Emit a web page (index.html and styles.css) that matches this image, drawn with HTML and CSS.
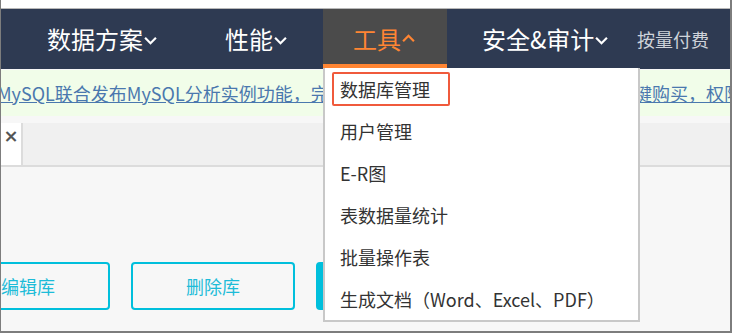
FILE: index.html
```html
<!DOCTYPE html>
<html lang="zh-CN">
<head>
  <meta charset="UTF-8" />
  <title>工具 - 数据库管理</title>
  <link rel="stylesheet" href="styles.css">
</head>
<body>
  <div class="frame">
    <div class="top-strip"></div>

    <nav class="topnav">
      <div class="nav-item item-plan">数据方案<svg class="chev" viewBox="0 0 12 8"><polyline points="1,1.5 6,6.5 11,1.5"/></svg></div>
      <div class="nav-item item-perf">性能<svg class="chev" viewBox="0 0 12 8"><polyline points="1,1.5 6,6.5 11,1.5"/></svg></div>
      <div class="nav-item nav-tools">工具<svg class="chev up" viewBox="0 0 12 8"><polyline points="1,6.5 6,1.5 11,6.5"/></svg>
        <ul class="dropdown">
          <li><span class="picked">数据库管理</span></li>
          <li>用户管理</li>
          <li>E-R图</li>
          <li>表数据量统计</li>
          <li>批量操作表</li>
          <li>生成文档（Word、Excel、PDF）</li>
        </ul>
      </div>
      <div class="nav-item item-sec">安全&amp;审计<svg class="chev" viewBox="0 0 12 8"><polyline points="1,1.5 6,6.5 11,1.5"/></svg></div>
      <div class="nav-item nav-small">按量付费</div>
    </nav>

    <div class="notice">
      <a class="notice-left" href="#">MySQL联合发布MySQL分析实例功能，完成一</a>
      <a class="notice-right" href="#">键购买，权限</a>
    </div>

    <div class="tabbar">
      <div class="tab"><span class="tab-close">×</span></div>
    </div>

    <div class="content">
      <div class="btn-row">
        <button class="btn">编辑库</button>
        <button class="btn">删除库</button>
        <button class="btn btn-fill">新建库</button>
      </div>
    </div>
  </div>
</body>
</html>
```

FILE: styles.css
```css
:root {
  --nav-bg: #2e3a52;
  --nav-tab-bg: #4b4b4b;
  --accent-orange: #ff8533;
  --cyan: #00bfdc;
  --menu-border: #c8c8c8;
  --text-dark: #333;
  --link-blue: #4a78ae;
}

* {
  box-sizing: border-box;
  margin: 0;
  padding: 0;
}

body {
  font-family: "Noto Sans CJK SC", "DejaVu Sans", sans-serif;
  background: #fff;
}

.frame {
  width: 732px;
  height: 333px;
  border-left: 1px solid #7d7d7d;
  border-right: 2px solid #7d7d7d;
  border-bottom: 2px solid #7d7d7d;
  background: #f7f7f7;
  overflow: hidden;
}

.top-strip {
  height: 9px;
  background: #fff;
  border-bottom: 1px solid #b8b8b8;
}

.topnav {
  display: flex;
  height: 60px;
  background: var(--nav-bg);
  color: #fff;
  padding-left: 46px;
}

.nav-item {
  flex: none;
  display: flex;
  align-items: center;
  font-size: 24px;
  line-height: 1;
}
.item-plan { width: 178px; }
.item-perf { width: 98px; }
.item-sec { width: 155px; margin-left: 35px; }

.chev {
  width: 13px;
  height: 9px;
  margin-left: 1px;
  margin-top: 2px;
  fill: none;
  stroke: currentColor;
  stroke-width: 2;
}
.chev.up { margin-top: -2px; }

.nav-tools {
  position: relative;
  width: 124px;
  padding-left: 30px;
  background: var(--nav-tab-bg);
  color: var(--accent-orange);
  border-bottom: 5px solid var(--accent-orange);
  padding-top: 5px;
}

.nav-small {
  font-size: 18px;
  color: #cfd3da;
}

.dropdown {
  position: absolute;
  left: 0;
  top: 59px;
  width: 317px;
  list-style: none;
  background: #fff;
  border: 2px solid var(--menu-border);
  border-top: 0;
  z-index: 5;
}
.dropdown li {
  height: 42px;
  line-height: 42px;
  padding-left: 15px;
  font-size: 18px;
  color: var(--text-dark);
  white-space: nowrap;
}
.dropdown li:first-child {
  padding: 4px 0 4px 7px;
  line-height: 30px;
}
.picked {
  display: block;
  width: 118px;
  height: 34px;
  padding-left: 6px;
  border: 2px solid #f05a3c;
  border-radius: 2px;
}

.notice {
  display: flex;
  justify-content: space-between;
  height: 46px;
  margin-top: 1px;
  background: #f1fde9;
  font-size: 18px;
  line-height: 46px;
  white-space: nowrap;
  overflow: hidden;
}
.notice a {
  color: var(--link-blue);
  text-decoration: underline;
}
.notice-left { margin-left: -4px; }
.notice-right { margin-right: -12px; }

.tabbar {
  height: 44px;
  margin-top: 7px;
  background: #f0f0f0;
  border-bottom: 2px solid #dcdcdc;
}
.tab {
  width: 22px;
  height: 42px;
  background: #fff;
  border-right: 2px solid #dcdcdc;
  display: flex;
  justify-content: center;
  padding-top: 4px;
}
.tab-close {
  font-family: "DejaVu Sans", sans-serif;
  font-size: 18px;
  font-weight: bold;
  color: #555;
  line-height: 1;
}

.content {
  padding-top: 95px;
}
.btn-row {
  display: flex;
  gap: 21px;
  margin-left: -55px;
}
.btn {
  flex: none;
  width: 164px;
  height: 48px;
  border: 2px solid var(--cyan);
  border-radius: 4px;
  background: transparent;
  color: #1dbcd8;
  font-family: inherit;
  font-size: 18px;
}
.btn-fill {
  background: var(--cyan);
  color: #fff;
}
```
